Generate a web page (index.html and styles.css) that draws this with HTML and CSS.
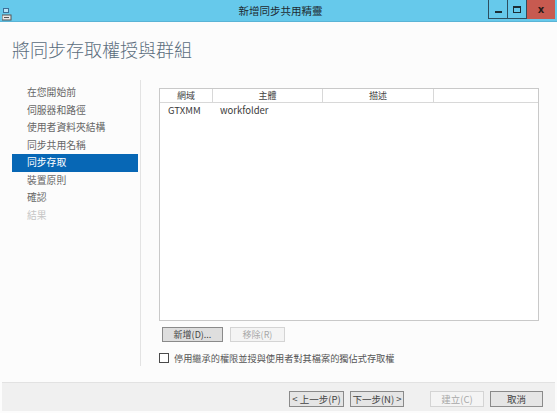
FILE: index.html
```html
<!DOCTYPE html>
<html>
<head>
<meta charset="utf-8">
<link rel="stylesheet" href="styles.css">
</head>
<body>
<div class="window">
  <div class="titlebar">
    <div class="appicon">
      <svg width="10" height="14" viewBox="0 0 10 14">
        <rect x="1" y="1" width="6" height="5" fill="#3c6f98"/>
        <rect x="2" y="2" width="4" height="3" fill="#b9e3f5"/>
        <rect x="0" y="8" width="9" height="5" fill="#e8e8e8" stroke="#555" stroke-width="1"/>
        <rect x="2" y="10" width="5" height="1" fill="#555"/>
      </svg>
    </div>
    <div class="title">新增同步共用精靈</div>
    <div class="controls">
      <div class="ctl min"><span class="minbar"></span></div>
      <div class="ctl max"><span class="maxbox"></span></div>
      <div class="ctl close">x</div>
    </div>
  </div>
  <div class="heading">將同步存取權授與群組</div>
  <div class="main">
    <div class="nav">
      <div class="navitem">在您開始前</div>
      <div class="navitem">伺服器和路徑</div>
      <div class="navitem">使用者資料夾結構</div>
      <div class="navitem">同步共用名稱</div>
      <div class="navitem active">同步存取</div>
      <div class="navitem">裝置原則</div>
      <div class="navitem">確認</div>
      <div class="navitem disabled">結果</div>
    </div>
    <div class="content">
      <div class="table">
        <div class="thead">
          <div class="th c1">網域</div>
          <div class="th c2">主體</div>
          <div class="th c3">描述</div>
          <div class="th c4"></div>
        </div>
        <div class="trow">
          <div class="td c1">GTXMM</div>
          <div class="td c2">workfolder</div>
          <div class="td c3"></div>
          <div class="td c4"></div>
        </div>
      </div>
      <div class="tablebtns">
        <button class="btn pressed add">新增(D)...</button>
        <button class="btn disabledbtn remove">移除(R)</button>
      </div>
      <label class="check">
        <span class="box"></span>
        <span class="checktext">停用繼承的權限並授與使用者對其檔案的獨佔式存取權</span>
      </label>
    </div>
  </div>
  <div class="footer">
    <button class="btn fbtn prev">&lt; 上一步(P)</button>
    <button class="btn fbtn next">下一步(N) &gt;</button>
    <button class="btn fbtn disabledbtn create">建立(C)</button>
    <button class="btn fbtn cancel">取消</button>
  </div>
</div>
</body>
</html>
```
FILE: styles.css
```css
* { box-sizing: border-box; }
html, body {
  margin: 0;
  padding: 0;
  background: #ffffff;
}
body {
  width: 557px;
  height: 413px;
  overflow: hidden;
  font-family: "Noto Sans CJK TC", "Noto Sans", sans-serif;
  color: #333;
}
.window {
  width: 557px;
  height: 413px;
  display: flex;
  flex-direction: column;
  background: #fcfcfc;
}
.titlebar {
  height: 22px;
  background: #66c9eb;
  border-bottom: 1px solid #5ab4d6;
  display: grid;
  grid-template-columns: 1fr auto 1fr;
  align-items: start;
}
.appicon {
  padding: 2px 0 0 2px;
  height: 20px;
}
.title {
  font-size: 10.5px;
  line-height: 21px;
  color: #1d2a30;
  padding-left: 4px;
}
.controls {
  justify-self: end;
  display: flex;
  margin-right: 2px;
  height: 19px;
}
.ctl {
  height: 19px;
  display: flex;
  align-items: center;
  justify-content: center;
}
.min {
  width: 20px;
  border: 1px solid #2d4f60;
  border-top: none;
}
.max {
  width: 19px;
  border: 1px solid #2d4f60;
  border-top: none;
  border-left: none;
}
.close {
  width: 28px;
  background: #c75a50;
  color: #2a1a18;
  font-family: "DejaVu Sans", sans-serif;
  font-weight: bold;
  font-size: 10px;
  line-height: 19px;
}
.minbar {
  display: block;
  width: 7px;
  height: 2px;
  background: #1c2e36;
  margin-top: 6px;
}
.maxbox {
  display: block;
  width: 8px;
  height: 7px;
  border: 1px solid #1c2e36;
  border-top-width: 2px;
}
.heading {
  height: 58px;
  padding: 15px 0 0 12px;
  font-size: 18px;
  line-height: 24px;
  color: #5a6d7d;
  font-weight: 300;
}
.main {
  display: flex;
  height: 288px;
}
.nav {
  width: 141px;
  padding: 4px 2px 0 12px;
  border-right: 1px solid #e3e3e3;
  margin-bottom: 2px;
}
.navitem {
  height: 17.5px;
  line-height: 17.5px;
  padding-left: 15px;
  font-size: 9.8px;
  color: #666;
}
.navitem.active {
  background: #0767b5;
  color: #ffffff;
}
.navitem.disabled {
  color: #c6c6c6;
}
.content {
  flex: 1;
  padding: 8px 18px 0 18px;
  display: flex;
  flex-direction: column;
}
.table {
  height: 233px;
  border: 1px solid #c9c9c9;
  background: #ffffff;
}
.thead, .trow {
  display: flex;
}
.thead {
  height: 14px;
  border-bottom: 1px solid #d8d8d8;
}
.th {
  font-size: 9px;
  line-height: 13px;
  text-align: center;
  color: #444;
  border-right: 1px solid #d8d8d8;
}
.th.c4 { border-right: none; }
.c1 { width: 53px; }
.c2 { width: 110px; }
.c3 { width: 111px; }
.c4 { flex: 1; }
.td {
  font-size: 9.5px;
  line-height: 14px;
  color: #3a3a3a;
}
.td.c1 { padding-left: 8px; }
.td.c2 { padding-left: 7px; }
.tablebtns {
  display: flex;
  gap: 7px;
  margin: 6px 0 0 3px;
}
.btn {
  font-family: "Noto Sans CJK TC", "Noto Sans", sans-serif;
  font-size: 9px;
  height: 15px;
  padding: 0;
  line-height: 13px;
  background: #e5e5e5;
  border: 1px solid #adadad;
  color: #444;
}
.pressed {
  background: #dedede;
  border-color: #8a8a8a;
}
.add { width: 61px; }
.remove { width: 55px; }
.disabledbtn {
  background: #f4f4f4;
  border-color: #d4d4d4;
  color: #a8a8a8;
}
.check {
  display: flex;
  align-items: center;
  margin-top: 10px;
  height: 12px;
}
.box {
  width: 10px;
  height: 10px;
  border: 1px solid #4a4a4a;
  background: #fff;
  margin-right: 5px;
}
.checktext {
  font-size: 9.2px;
  color: #555;
}
.footer {
  margin-top: 14px;
  height: 29px;
  background: #f0f0f0;
  border-top: 1px solid #e2e2e2;
  display: flex;
  align-items: flex-start;
  padding: 8px 0 0 287px;
  margin-left: 2px;
  width: 553px;
}
.fbtn {
  height: 16px;
  line-height: 14px;
  font-size: 9.5px;
}
.prev { width: 55px; border-color: #8a8a8a; }
.next { width: 54px; margin-left: 6px; border-color: #8a8a8a; }
.create { width: 54px; margin-left: 26px; }
.cancel { width: 53px; margin-left: 6px; border-color: #8a8a8a; }
```
